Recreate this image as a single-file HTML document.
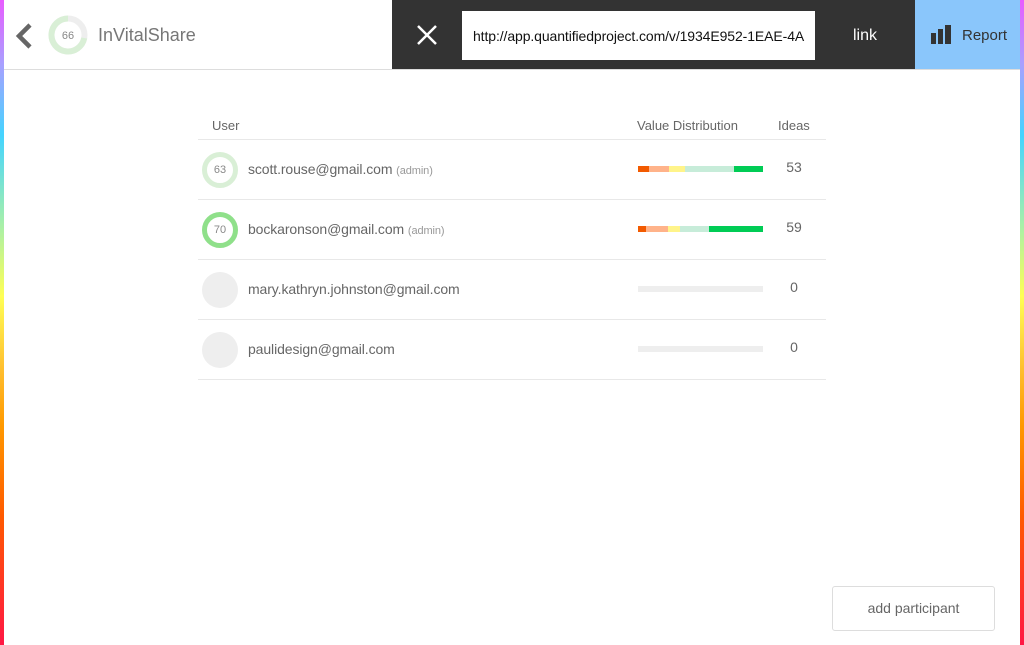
<!DOCTYPE html>
<html><head><style>
*{margin:0;padding:0;box-sizing:border-box}
body{width:1024px;height:645px;position:relative;overflow:hidden;background:#fff;font-family:"Liberation Sans",sans-serif;color:#666}
.edge{position:absolute;top:0;width:4px;height:645px;background:linear-gradient(#e95cff 0%,#a8a0ff 10%,#44d4ff 21%,#a8f0a8 35%,#ffff55 46%,#ffc030 57%,#ff9900 66%,#ff5a00 80%,#ff1744 100%)}
.hdr{position:absolute;left:0;top:0;width:1024px;height:70px;border-bottom:1px solid #ddd}
.dark{position:absolute;left:392px;top:0;width:523px;height:69px;background:#333}
.url{position:absolute;left:462px;top:11px;width:353px;height:49px;background:#fff;color:#111;font-size:14px;line-height:51px;padding-left:11px;white-space:nowrap;overflow:hidden;letter-spacing:-0.1px}
.link{position:absolute;left:853px;top:27px;color:#fff;font-size:16px}
.rep{position:absolute;left:915px;top:0;width:105px;height:69px;background:#8ac6fb}
.row{position:absolute;left:198px;width:628px;height:60px;border-bottom:1px solid #e8e8e8}
.av{position:absolute;left:4px;top:12px;width:36px;height:36px;border-radius:50%;font-size:11px;color:#888;text-align:center;line-height:26px}
.em{position:absolute;left:50px;top:21px;font-size:14px;color:#666;letter-spacing:-0.1px}
.em small{font-size:11px;color:#999}
.bar{position:absolute;left:440px;top:26px;width:125px;height:6px;display:flex;background:#eee}
.n{position:absolute;left:586px;width:20px;text-align:center;top:19px;font-size:14px;color:#666}
</style></head><body>
<div class="hdr"></div>
<svg style="position:absolute;left:14px;top:22px" width="20" height="28"><path d="M16 3 L5 14 L16 25" stroke="#666" stroke-width="4.5" fill="none"/></svg>
<svg style="position:absolute;left:48px;top:15px" width="40" height="40"><circle cx="20" cy="20" r="16.5" stroke="#eee" stroke-width="6" fill="none"/><path d="M20 3.5 A16.5 16.5 0 1 0 36.2 23" stroke="#d9efd6" stroke-width="6" fill="none"/><text x="20" y="24" font-size="11" fill="#888" text-anchor="middle" font-family="Liberation Sans">66</text></svg>
<div style="position:absolute;left:98px;top:25px;font-size:18px;color:#777">InVitalShare</div>
<div class="dark"></div>
<svg style="position:absolute;left:416px;top:24px" width="22" height="22"><path d="M2 2L20 20M20 2L2 20" stroke="#fff" stroke-width="2.5"/></svg>
<div class="url">http://app.quantifiedproject.com/v/1934E952-1EAE-4A</div>
<div class="link">link</div>
<div class="rep"><svg style="position:absolute;left:16px;top:25px" width="20" height="20"><rect x="0" y="8" width="5" height="11" fill="#333"/><rect x="7" y="4" width="5" height="15" fill="#333"/><rect x="14" y="0" width="6" height="19" fill="#333"/></svg><div style="position:absolute;left:47px;top:27px;font-size:15px;color:#333">Report</div></div>
<div style="position:absolute;left:198px;top:118px;width:628px;height:22px;border-bottom:1px solid #e8e8e8;font-size:13px;color:#666"><span style="position:absolute;left:14px">User</span><span style="position:absolute;left:439px">Value Distribution</span><span style="position:absolute;left:580px">Ideas</span></div>
<div class="row" style="top:140px"><div class="av" style="border:5px solid #d9efd6">63</div><div class="em">scott.rouse@gmail.com <small>(admin)</small></div><div class="bar"><i style="width:11px;background:#f25a00"></i><i style="width:20px;background:#ffb38a"></i><i style="width:16px;background:#fff48a"></i><i style="width:49px;background:#c7ecd9"></i><i style="width:29px;background:#00cc55"></i></div><div class="n">53</div></div>
<div class="row" style="top:200px"><div class="av" style="border:5px solid #8fe08a">70</div><div class="em">bockaronson@gmail.com <small>(admin)</small></div><div class="bar"><i style="width:8px;background:#f25a00"></i><i style="width:22px;background:#ffb38a"></i><i style="width:12px;background:#fff48a"></i><i style="width:29px;background:#c7ecd9"></i><i style="width:54px;background:#00cc55"></i></div><div class="n">59</div></div>
<div class="row" style="top:260px"><div class="av" style="background:#eee"></div><div class="em">mary.kathryn.johnston@gmail.com</div><div class="bar"></div><div class="n">0</div></div>
<div class="row" style="top:320px"><div class="av" style="background:#eee"></div><div class="em">paulidesign@gmail.com</div><div class="bar"></div><div class="n">0</div></div>
<div style="position:absolute;left:832px;top:586px;width:163px;height:45px;border:1px solid #ddd;border-radius:3px;font-size:14px;color:#666;text-align:center;line-height:43px">add participant</div>
<div class="edge" style="left:0"></div><div class="edge" style="left:1020px"></div>
</body></html>
